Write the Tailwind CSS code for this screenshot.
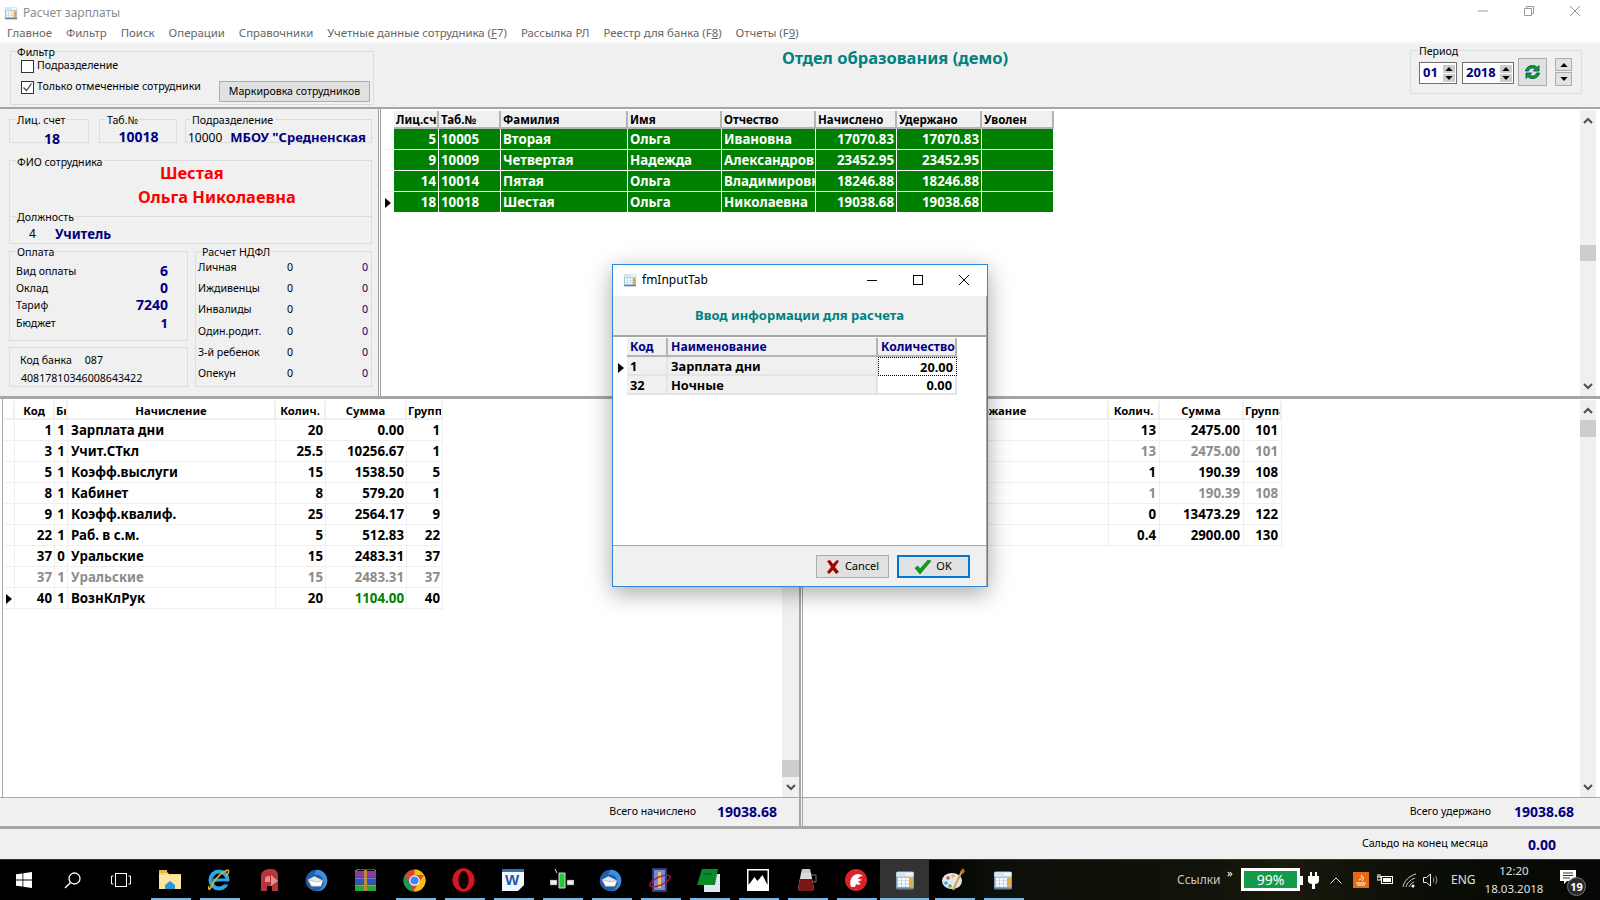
<!DOCTYPE html>
<html lang="ru">
<head>
<meta charset="utf-8">
<title>Расчет зарплаты</title>
<script src="https://cdn.jsdelivr.net/npm/@tailwindcss/browser@4"></script>
</head>
<body class="m-0 bg-white">
<svg class="hidden" aria-hidden="true">
  <symbol id="calc" viewBox="0 0 32 32">
    <rect x="2" y="2" width="28" height="28" rx="3" fill="#a9c3d8"/>
    <rect x="2" y="2" width="28" height="8" rx="2" fill="#d5e4ef"/>
    <rect x="17" y="4" width="11" height="4" fill="#f4f8fb"/>
    <g fill="#ffffff"><rect x="5" y="12" width="5" height="4"/><rect x="11" y="12" width="5" height="4"/><rect x="17" y="12" width="5" height="4"/><rect x="5" y="17" width="5" height="4"/><rect x="11" y="17" width="5" height="4"/><rect x="17" y="17" width="5" height="4"/><rect x="5" y="22" width="5" height="4"/><rect x="11" y="22" width="5" height="4"/><rect x="17" y="22" width="5" height="4"/></g>
    <rect x="23" y="12" width="5" height="14" fill="#f0a92e"/>
    <rect x="2" y="27" width="28" height="3" rx="1" fill="#5f84a3"/>
  </symbol>
  <symbol id="tbird" viewBox="0 0 32 32">
    <circle cx="16" cy="16" r="15" fill="#1f5fa8"/>
    <path d="M16 1a15 15 0 0 1 15 15c0 8-6 15-14 15 8-3 10-10 8-16C23 9 19 7 13 8 14 5 15 3 16 1z" fill="#3f8ed8"/>
    <path d="M4 15l9-5 12 6-3 8H9z" fill="#e8e8e8"/>
    <path d="M4 15l12 3 9-2-3 8H9z" fill="#ffffff" stroke="#8a8a8a" stroke-width=".7"/>
  </symbol>
  <symbol id="tri" viewBox="0 0 6 10"><path d="M0 0l6 5-6 5z" fill="#000"/></symbol>
  <symbol id="up" viewBox="0 0 9 5"><path d="M4.5 0L9 5H0z" fill="#000"/></symbol>
  <symbol id="down" viewBox="0 0 9 5"><path d="M0 0h9L4.5 5z" fill="#000"/></symbol>
  <symbol id="chevu" viewBox="0 0 10 7"><path d="M1 6l4-4 4 4" fill="none" stroke="#505050" stroke-width="2"/></symbol>
  <symbol id="chevd" viewBox="0 0 10 7"><path d="M1 1l4 4 4-4" fill="none" stroke="#505050" stroke-width="2"/></symbol>
</svg>

<div class="relative w-[1600px] h-[900px] overflow-hidden flex flex-col bg-white text-black font-['Noto_Sans',sans-serif]">

  <!-- title bar -->
  <div class="h-[22px] flex items-center shrink-0 pt-[3px]">
    <svg class="ml-[4px] w-[14px] h-[14px]"><use href="#calc"/></svg>
    <span class="ml-[5px] text-[12px] leading-none text-[#8c8c8c]">Расчет зарплаты</span>
    <div class="ml-auto flex items-center h-full -mt-[3px]">
      <svg class="w-[46px] h-[12px]" viewBox="0 0 46 12"><path d="M18 6h10" stroke="#999" stroke-width="1"/></svg>
      <svg class="w-[46px] h-[12px]" viewBox="0 0 46 12"><path d="M18.5 3.5h7v7h-7zM20.5 3.5v-2h7v7h-2" fill="none" stroke="#999"/></svg>
      <svg class="w-[46px] h-[12px] mr-[2px]" viewBox="0 0 46 12"><path d="M18 1l10 10M28 1L18 11" stroke="#999"/></svg>
    </div>
  </div>

  <!-- menu -->
  <div class="h-[19px] flex items-center pl-[7px] pt-[2px] gap-[14px] text-[11.4px] leading-none text-[#666] shrink-0 whitespace-nowrap">
    <span>Главное</span><span>Фильтр</span><span>Поиск</span><span>Операции</span><span>Справочники</span>
    <span>Учетные данные сотрудника (<u>F</u>7)</span><span>Рассылка РЛ</span><span>Реестр для банка (F<u>8</u>)</span><span>Отчеты (F<u>9</u>)</span>
  </div>
  <div class="h-[3px] bg-[#f7f7f7] shrink-0"></div>

  <!-- toolbar -->
  <div class="h-[65px] shrink-0 bg-[#f0f0f0] border-b-2 border-[#a6a6a6] flex text-[10.6px]">
    <div class="relative ml-[10px] mt-[7px] w-[364px] h-[54px] border border-[#dcdcdc] flex">
      <span class="absolute top-[-7px] left-[6px] bg-[#f0f0f0] leading-[14px]">Фильтр</span>
      <div class="pl-[10px] pt-[8px] flex flex-col gap-[9px] w-[208px] whitespace-nowrap">
        <label class="flex items-center gap-[3px] h-[12px]"><span class="w-[13px] h-[13px] border border-[#333] bg-white"></span>Подразделение</label>
        <label class="flex items-center gap-[3px] h-[12px]"><span class="w-[13px] h-[13px] border border-[#333] bg-white flex items-center justify-center"><svg class="w-[11px] h-[11px]" viewBox="0 0 11 11"><path d="M1.5 5.5l3 3 5-7" fill="none" stroke="#444" stroke-width="1.2"/></svg></span>Только отмеченные сотрудники</label>
      </div>
      <div class="w-[151px] h-[21px] mt-[29px] border border-[#adadad] bg-[#e1e1e1] flex items-center justify-center whitespace-nowrap">Маркировка сотрудников</div>
    </div>
    <div class="flex-1 text-center pt-[2px] pl-[6px]">
      <span class="text-[16.5px] leading-[24px] font-bold text-[#008080] whitespace-nowrap">Отдел образования (демо)</span>
    </div>
    <div class="relative mt-[6px] mr-[18px] w-[172px] h-[44px] border border-[#dcdcdc] flex items-start pl-[8px] pt-[5px]">
      <span class="absolute top-[-7px] left-[7px] bg-[#f0f0f0] px-px leading-[14px]">Период</span>
      <div class="w-[38px] h-[22px] mt-[6px] border border-[#707070] bg-white flex items-center justify-between pl-[3px] pr-[1px]">
        <span class="text-[13px] font-bold text-[#000080]">01</span>
        <span class="flex flex-col gap-px"><span class="w-[12px] h-[8px] bg-[#cdcdcd] flex items-center justify-center"><svg class="w-[8px] h-[4px]"><use href="#up"/></svg></span><span class="w-[12px] h-[8px] bg-[#cdcdcd] flex items-center justify-center"><svg class="w-[8px] h-[4px]"><use href="#down"/></svg></span></span>
      </div>
      <div class="ml-[5px] w-[52px] h-[22px] mt-[6px] border border-[#707070] bg-white flex items-center justify-between pl-[3px] pr-[1px]">
        <span class="text-[13px] font-bold text-[#000080]">2018</span>
        <span class="flex flex-col gap-px"><span class="w-[12px] h-[8px] bg-[#cdcdcd] flex items-center justify-center"><svg class="w-[8px] h-[4px]"><use href="#up"/></svg></span><span class="w-[12px] h-[8px] bg-[#cdcdcd] flex items-center justify-center"><svg class="w-[8px] h-[4px]"><use href="#down"/></svg></span></span>
      </div>
      <div class="ml-[4px] mt-[2px] w-[29px] h-[28px] border border-[#adadad] bg-[#e1e1e1] flex items-center justify-center">
        <svg class="w-[19px] h-[18px]" viewBox="0 0 19 18">
          <path d="M2.5 8C3 4.5 6 2.5 9.5 2.5c2 0 3.5.7 4.7 1.9L16 2.5V8h-5.6l1.9-1.9C11.500 5.300 10.500 5 9.500 5 7.500 5 6 6.200 5.500 8z" fill="#00b000" stroke="#003a80" stroke-width=".8"/>
          <path d="M16.500 10c-.5 3.500-3.500 5.500-7 5.500-2 0-3.500-.7-4.700-1.900L3 15.500V10h5.600l-1.900 1.900c.8.800 1.800 1.100 2.800 1.100 2 0 3.500-1.200 4-3z" fill="#00b000" stroke="#003a80" stroke-width=".8"/>
        </svg>
      </div>
      <div class="ml-[8px] mt-[2px] flex flex-col gap-px">
        <span class="w-[17px] h-[13px] border border-[#adadad] bg-[#e1e1e1] flex items-center justify-center"><svg class="w-[8px] h-[4px]"><use href="#up"/></svg></span>
        <span class="w-[17px] h-[14px] border border-[#adadad] bg-[#e1e1e1] flex items-center justify-center"><svg class="w-[8px] h-[4px]"><use href="#down"/></svg></span>
      </div>
    </div>
  </div>

  <!-- middle -->
  <div class="h-[287px] shrink-0 flex">
    <div class="w-[379px] shrink-0 bg-[#f0f0f0] border-r border-[#a0a0a0] pt-[10px] pl-[9px] text-[10.6px] leading-[14px]">
      <div class="flex h-[24px]">
        <div class="relative w-[80px] border border-[#dcdcdc] text-center pl-[6px]">
          <span class="absolute top-[-7px] left-[6px] bg-[#f0f0f0] px-px">Лиц. счет</span>
          <div class="pt-[12px] text-[14px] font-bold text-[#000080]">18</div>
        </div>
        <div class="relative ml-[10px] w-[78px] border border-[#dcdcdc] text-center pl-px">
          <span class="absolute top-[-7px] left-[6px] bg-[#f0f0f0] px-px">Таб.№</span>
          <div class="pt-[10px] text-[14px] font-bold text-[#000080]">10018</div>
        </div>
        <div class="relative ml-[8px] w-[187px] border border-[#dcdcdc] flex items-baseline whitespace-nowrap pl-[2px] pt-[10px]">
          <span class="absolute top-[-7px] left-[4px] bg-[#f0f0f0] px-[2px]">Подразделение</span>
          <span class="text-[12px]">10000</span><span class="ml-[8px] text-[13px] font-bold text-[#000080]">МБОУ "Средненская</span>
        </div>
      </div>
      <div class="relative mt-[17px] w-[363px] h-[56px] border border-b-0 border-[#dcdcdc] text-[16.4px] leading-[24px] font-bold text-[#ff0000]">
        <span class="absolute top-[-6px] left-[6px] bg-[#f0f0f0] px-px text-[10.6px] leading-[14px] font-normal text-black">ФИО сотрудника</span>
        <div class="pl-[150px]">Шестая</div>
        <div class="pl-[128px]">Ольга Николаевна</div>
      </div>
      <div class="relative w-[363px] h-[28px] border border-[#dcdcdc] flex items-center pt-[7px]">
        <span class="absolute top-[-7px] left-[6px] bg-[#f0f0f0] px-px">Должность</span>
        <span class="ml-[19px] text-[12px]">4</span><span class="ml-[19px] text-[13.3px] font-bold text-[#000080]">Учитель</span>
      </div>
      <div class="flex mt-[7px]">
        <div class="w-[179px]">
          <div class="relative h-[90px] border border-[#dcdcdc] pt-[10px] pl-[6px] pr-[19px]">
            <span class="absolute top-[-7px] left-[6px] bg-[#f0f0f0] px-px">Оплата</span>
            <div class="flex justify-between items-center h-[17px]"><span>Вид оплаты</span><span class="text-[14px] font-bold text-[#000080]">6</span></div>
            <div class="flex justify-between items-center h-[17px]"><span>Оклад</span><span class="text-[14px] font-bold text-[#000080]">0</span></div>
            <div class="flex justify-between items-center h-[18px]"><span>Тариф</span><span class="text-[14px] font-bold text-[#000080]">7240</span></div>
            <div class="flex justify-between items-center h-[17px]"><span>Бюджет</span><span class="text-[13px] font-bold text-[#000080]">1</span></div>
          </div>
          <div class="mt-[6px] h-[40px] border border-[#dcdcdc] pl-[10px] pt-[3px]">
            <div class="h-[18px] flex items-center"><span>Код банка</span><span class="ml-[13px]">087</span></div>
            <div class="h-[18px] flex items-center pl-[1px]">40817810346008643422</div>
          </div>
        </div>
        <div class="relative ml-[7px] w-[177px] h-[136px] border border-[#dcdcdc] pt-[4px] pl-[2px] pr-[3px]">
          <span class="absolute top-[-7px] left-[5px] bg-[#f0f0f0] px-px">Расчет НДФЛ</span>
          <div class="grid grid-cols-[86px_12px_1fr] auto-rows-[21.3px] items-center">
            <span>Личная</span><span class="text-center">0</span><span class="text-right text-[#000060]">0</span>
            <span>Иждивенцы</span><span class="text-center">0</span><span class="text-right text-[#000060]">0</span>
            <span>Инвалиды</span><span class="text-center">0</span><span class="text-right text-[#000060]">0</span>
            <span>Один.родит.</span><span class="text-center">0</span><span class="text-right text-[#000060]">0</span>
            <span>3-й ребенок</span><span class="text-center">0</span><span class="text-right text-[#000060]">0</span>
            <span>Опекун</span><span class="text-center">0</span><span class="text-right text-[#000060]">0</span>
          </div>
        </div>
      </div>
    </div>

    <div class="flex-1 ml-[1px] border-l border-[#a0a0a0] flex pt-[2px]">
      <div class="flex-1 pl-[1px]">
        <table class="table-fixed border-separate border-spacing-0 w-[672px] text-[13.3px] font-bold leading-none whitespace-nowrap [&_td]:h-[21px] [&_td]:pt-[2px] [&_td]:overflow-hidden [&_td]:border-r [&_td]:border-b [&_td]:border-white [&_td]:px-[2px] [&_th]:h-[18px] [&_th]:overflow-hidden [&_th]:px-[2px] [&_th]:pt-[2px] [&_th]:text-left [&_th]:text-[11.5px] [&_th]:font-bold [&_th]:bg-[#f0f0f0] [&_th]:border-r-2 [&_th]:border-b-2 [&_th]:border-[#b4b4b4]">
          <colgroup><col class="w-[12px]"><col class="w-[45px]"><col class="w-[62px]"><col class="w-[127px]"><col class="w-[94px]"><col class="w-[94px]"><col class="w-[81px]"><col class="w-[85px]"><col class="w-[72px]"></colgroup>
          <thead><tr><th class="!bg-white !border-0"></th><th class="!pr-0">Лиц.сч.</th><th>Таб.№</th><th>Фамилия</th><th>Имя</th><th>Отчество</th><th>Начислено</th><th>Удержано</th><th>Уволен</th></tr></thead>
          <tbody class="text-white">
            <tr><td class="!border-b-[#f0f0f0]"></td><td class="bg-[#008000] text-right">5</td><td class="bg-[#008000]">10005</td><td class="bg-[#008000]">Вторая</td><td class="bg-[#008000]">Ольга</td><td class="bg-[#008000]">Ивановна</td><td class="bg-[#008000] text-right">17070.83</td><td class="bg-[#008000] text-right">17070.83</td><td class="bg-[#008000]"></td></tr>
            <tr><td class="!border-b-[#f0f0f0]"></td><td class="bg-[#008000] text-right">9</td><td class="bg-[#008000]">10009</td><td class="bg-[#008000]">Четвертая</td><td class="bg-[#008000]">Надежда</td><td class="bg-[#008000]">Александров</td><td class="bg-[#008000] text-right">23452.95</td><td class="bg-[#008000] text-right">23452.95</td><td class="bg-[#008000]"></td></tr>
            <tr><td class="!border-b-[#f0f0f0]"></td><td class="bg-[#008000] text-right">14</td><td class="bg-[#008000]">10014</td><td class="bg-[#008000]">Пятая</td><td class="bg-[#008000]">Ольга</td><td class="bg-[#008000]">Владимировна</td><td class="bg-[#008000] text-right">18246.88</td><td class="bg-[#008000] text-right">18246.88</td><td class="bg-[#008000]"></td></tr>
            <tr><td><svg class="w-[6px] h-[10px] ml-[1px]"><use href="#tri"/></svg></td><td class="bg-[#008000] text-right">18</td><td class="bg-[#008000]">10018</td><td class="bg-[#008000]">Шестая</td><td class="bg-[#008000]">Ольга</td><td class="bg-[#008000]">Николаевна</td><td class="bg-[#008000] text-right">19038.68</td><td class="bg-[#008000] text-right">19038.68</td><td class="bg-[#008000]"></td></tr>
          </tbody>
        </table>
      </div>
      <div class="w-[16px] mr-[4px] -mt-[1px] bg-[#f0f0f0] flex flex-col shrink-0">
        <div class="h-[20px] flex items-center justify-center"><svg class="w-[10px] h-[7px]"><use href="#chevu"/></svg></div>
        <div class="mt-[115px] h-[16px] bg-[#cdcdcd]"></div>
        <div class="flex-1"></div>
        <div class="h-[20px] flex items-center justify-center"><svg class="w-[10px] h-[7px]"><use href="#chevd"/></svg></div>
      </div>
    </div>
  </div>

  <div class="h-[3px] shrink-0 bg-[#a6a6a6]"></div>

  <!-- bottom grids -->
  <div class="h-[398px] shrink-0 flex">
    <div class="w-[801px] shrink-0 pl-[2px] flex border-r-2 border-[#a6a6a6]">
      <div class="flex-1 border-l border-[#a6a6a6] pl-px pt-[2px]">
        <table class="table-fixed border-separate border-spacing-0 w-[436px] text-[13.3px] font-bold leading-none whitespace-nowrap [&_td]:h-[21px] [&_td]:pt-[2px] [&_td]:overflow-hidden [&_td]:border-r [&_td]:border-b [&_td]:border-[#efefef] [&_td]:pl-[3px] [&_td]:pr-[2px] [&_th]:h-[19px] [&_th]:overflow-hidden [&_th]:px-[1px] [&_th]:pt-[2px] [&_th]:text-[11.3px] [&_th]:font-bold [&_th]:border-r-2 [&_th]:border-b-2 [&_th]:border-[#efefef] [&_td:nth-child(n+2)]:text-right [&_td:nth-child(3)]:!text-center [&_td:nth-child(3)]:!px-0 [&_td:nth-child(4)]:!text-left">
          <colgroup><col class="w-[11px]"><col class="w-[40px]"><col class="w-[13px]"><col class="w-[208px]"><col class="w-[50px]"><col class="w-[81px]"><col class="w-[36px]"></colgroup>
          <thead><tr><th></th><th>Код</th><th class="text-left">Бюджет</th><th>Начисление</th><th>Колич.</th><th>Сумма</th><th class="text-left">Группа</th></tr></thead>
          <tbody>
            <tr><td></td><td>1</td><td>1</td><td>Зарплата дни</td><td>20</td><td>0.00</td><td>1</td></tr>
            <tr><td></td><td>3</td><td>1</td><td>Учит.СТкл</td><td>25.5</td><td>10256.67</td><td>1</td></tr>
            <tr><td></td><td>5</td><td>1</td><td>Коэфф.выслуги</td><td>15</td><td>1538.50</td><td>5</td></tr>
            <tr><td></td><td>8</td><td>1</td><td>Кабинет</td><td>8</td><td>579.20</td><td>1</td></tr>
            <tr><td></td><td>9</td><td>1</td><td>Коэфф.квалиф.</td><td>25</td><td>2564.17</td><td>9</td></tr>
            <tr><td></td><td>22</td><td>1</td><td>Раб. в с.м.</td><td>5</td><td>512.83</td><td>22</td></tr>
            <tr><td></td><td>37</td><td>0</td><td>Уральские</td><td>15</td><td>2483.31</td><td>37</td></tr>
            <tr class="text-[#8c8c8c]"><td></td><td>37</td><td>1</td><td>Уральские</td><td>15</td><td>2483.31</td><td>37</td></tr>
            <tr><td class="!px-[2px]"><svg class="w-[6px] h-[10px]"><use href="#tri"/></svg></td><td>40</td><td>1</td><td>ВознКлРук</td><td>20</td><td class="text-[#008000]">1104.00</td><td>40</td></tr>
          </tbody>
        </table>
      </div>
      <div class="w-[17px] bg-[#f0f0f0] flex flex-col shrink-0">
        <div class="h-[15px] flex items-center justify-center"><svg class="w-[10px] h-[7px]"><use href="#chevu"/></svg></div>
        <div class="mt-[346px] h-[17px] bg-[#cdcdcd]"></div>
        <div class="flex-1"></div>
        <div class="h-[20px] flex items-center justify-center"><svg class="w-[10px] h-[7px]"><use href="#chevd"/></svg></div>
      </div>
    </div>
    <div class="flex-1 ml-px border-l border-[#a6a6a6] flex pl-px pt-[2px]">
      <div class="flex-1">
        <table class="table-fixed border-separate border-spacing-0 w-[478px] text-[13.3px] font-bold leading-none whitespace-nowrap [&_td]:h-[21px] [&_td]:pt-[2px] [&_td]:overflow-hidden [&_td]:border-r [&_td]:border-b [&_td]:border-[#efefef] [&_td]:px-[3px] [&_td]:text-right [&_th]:h-[19px] [&_th]:overflow-hidden [&_th]:px-[1px] [&_th]:pt-[2px] [&_th]:text-[11.3px] [&_th]:font-bold [&_th]:border-r-2 [&_th]:border-b-2 [&_th]:border-[#efefef]">
          <colgroup><col class="w-[77px]"><col class="w-[228px]"><col class="w-[51px]"><col class="w-[84px]"><col class="w-[38px]"></colgroup>
          <thead><tr><th></th><th>Удержание</th><th>Колич.</th><th>Сумма</th><th class="text-left">Группа</th></tr></thead>
          <tbody>
            <tr><td></td><td></td><td>13</td><td>2475.00</td><td>101</td></tr>
            <tr class="text-[#8c8c8c]"><td></td><td></td><td>13</td><td>2475.00</td><td>101</td></tr>
            <tr><td></td><td></td><td>1</td><td>190.39</td><td>108</td></tr>
            <tr class="text-[#8c8c8c]"><td></td><td></td><td>1</td><td>190.39</td><td>108</td></tr>
            <tr><td></td><td></td><td>0</td><td>13473.29</td><td>122</td></tr>
            <tr><td></td><td></td><td>0.4</td><td>2900.00</td><td>130</td></tr>
          </tbody>
        </table>
      </div>
      <div class="w-[16px] mr-[4px] -mt-[1px] bg-[#f0f0f0] flex flex-col shrink-0">
        <div class="h-[20px] flex items-center justify-center"><svg class="w-[10px] h-[7px]"><use href="#chevu"/></svg></div>
        <div class="h-[17px] bg-[#cdcdcd]"></div>
        <div class="flex-1"></div>
        <div class="h-[20px] flex items-center justify-center"><svg class="w-[10px] h-[7px]"><use href="#chevd"/></svg></div>
      </div>
    </div>
  </div>

  <!-- footers -->
  <div class="h-[29px] shrink-0 flex bg-[#f0f0f0] border-t border-[#a6a6a6] text-[10.6px]">
    <div class="w-[801px] shrink-0 border-r-2 border-[#a6a6a6] flex items-center justify-end pr-[22px]">
      <span>Всего начислено</span><span class="ml-[21px] text-[14px] -mt-[1px] font-bold text-[#000080]">19038.68</span>
    </div>
    <div class="flex-1 ml-px border-l border-[#a6a6a6] flex items-center justify-end pr-[26px]">
      <span>Всего удержано</span><span class="ml-[23px] text-[14px] -mt-[1px] font-bold text-[#000080]">19038.68</span>
    </div>
  </div>
  <div class="h-[3px] shrink-0 bg-[#a6a6a6]"></div>
  <div class="h-[30px] shrink-0 bg-[#f0f0f0] flex items-center justify-end pr-[44px] text-[10.6px]">
    <span>Сальдо на конец месяца</span><span class="ml-[40px] text-[14px] font-bold text-[#000080]">0.00</span>
  </div>

  <!-- taskbar -->
  <div class="h-[41px] shrink-0 flex items-center text-[#d8d8d8] bg-[linear-gradient(90deg,#000_58%,#0c1008_62%,#12130a_76%,#1a1a0c_80%,#0a0d06_90%,#060805_100%)] border-t border-[#333]">
    <div class="w-[48px] h-full flex items-center justify-center"><svg class="w-[16px] h-[16px]" viewBox="0 0 16 16"><path d="M0 2.300l6.500-.9v6.200H0zM7.300 1.300L16 0v7.600H7.300zM0 8.400h6.500v6.200L0 13.700zM7.300 8.400H16V16l-8.700-1.200z" fill="#fff"/></svg></div>
    <div class="w-[48px] h-full flex items-center justify-center"><svg class="w-[17px] h-[17px]" viewBox="0 0 17 17"><circle cx="10.500" cy="6.500" r="5.500" fill="none" stroke="#fff" stroke-width="1.300"/><path d="M6.500 10.500L1 16" stroke="#fff" stroke-width="1.500"/></svg></div>
    <div class="w-[49px] h-full flex items-center justify-center"><svg class="w-[20px] h-[14px]" viewBox="0 0 20 14"><rect x="4.500" y=".5" width="11" height="13" fill="none" stroke="#fff"/><path d="M2.500 3H.5v8h2M17.500 3h2v8h-2" fill="none" stroke="#fff"/></svg></div>

    <div class="relative w-[49px] h-full flex items-center justify-center"><svg class="w-[22px] h-[20px]" viewBox="0 0 22 20"><path d="M0 2h8l2 2h12v15H0z" fill="#f5d77f"/><rect y="0" width="8" height="3" fill="#e0b84a"/><rect y="5" width="22" height="14" fill="#fbe7a1"/><path d="M6 15l5-4 5 4v4H6z" fill="#2a9ad6"/></svg><span class="absolute bottom-0 left-[6px] w-[40px] h-[2px] bg-[#76b9ed]"></span></div>
    <div class="relative w-[49px] h-full flex items-center justify-center"><svg class="w-[24px] h-[24px]" viewBox="0 0 24 24"><circle cx="12" cy="12" r="8.500" fill="none" stroke="#29a8e8" stroke-width="4"/><path d="M6 12h13" stroke="#29a8e8" stroke-width="3"/><rect x="15" y="13.500" width="8" height="3" fill="#000"/><path d="M3 21C7 12 14 4 21 2c2 2-1 5-2 6M3 21c-1 1-2 0-1-3" fill="none" stroke="#e6b422" stroke-width="1.500"/></svg><span class="absolute bottom-0 left-[6px] w-[40px] h-[2px] bg-[#76b9ed]"></span></div>
    <div class="w-[49px] h-full flex items-center justify-center"><svg class="w-[24px] h-[24px]" viewBox="0 0 24 24"><path d="M5 23V8c0-4 4-7 8-7h3c4 0 6 3 6 7v15h-6v-5h-5v5z" fill="#b7343a"/><path d="M9 14h5V8h-1c-2 0-4 1-4 3zM15 7l7 6-7 5z" fill="#e9a0a0" opacity=".85"/></svg></div>
    <div class="w-[49px] h-full flex items-center justify-center"><svg class="w-[23px] h-[23px]"><use href="#tbird"/></svg></div>
    <div class="w-[49px] h-full flex items-center justify-center"><svg class="w-[23px] h-[23px]" viewBox="0 0 23 23"><rect x="1" y="2" width="21" height="6" fill="#8e3aa6"/><rect x="1" y="9" width="21" height="6" fill="#2a55c8"/><rect x="1" y="16" width="21" height="6" fill="#27a83a"/><path d="M1 2l4-2h15l2 2M1 9h21M1 16h21" stroke="#ccc" stroke-width=".8" fill="none"/><rect x="10" y="1" width="3" height="21" fill="#b98a3a"/></svg></div>
    <div class="relative w-[49px] h-full flex items-center justify-center"><svg class="w-[23px] h-[23px]" viewBox="0 0 24 24"><circle cx="12" cy="12" r="11.500" fill="#db4437"/><path d="M12 .5a11.500 11.500 0 0 1 10 5.800H12z" fill="#f4c20d"/><path d="M22 6.300A11.500 11.500 0 0 1 11 23.500l5.500-9.500z" fill="#f4c20d"/><path d="M11 23.500A11.500 11.500 0 0 1 2 6.500l5.500 9.300z" fill="#0f9d58"/><circle cx="12" cy="12" r="5.500" fill="#fff"/><circle cx="12" cy="12" r="4.300" fill="#4285f4"/></svg><span class="absolute bottom-0 left-[6px] w-[40px] h-[2px] bg-[#76b9ed]"></span></div>
    <div class="relative w-[49px] h-full flex items-center justify-center"><svg class="w-[23px] h-[24px]" viewBox="0 0 23 24"><ellipse cx="11.500" cy="12" rx="11" ry="11.800" fill="#d5151f"/><ellipse cx="11.500" cy="12" rx="5" ry="9" fill="#000"/></svg><span class="absolute bottom-0 left-[6px] w-[40px] h-[2px] bg-[#76b9ed]"></span></div>
    <div class="relative w-[49px] h-full flex items-center justify-center"><svg class="w-[22px] h-[22px]" viewBox="0 0 22 22"><path d="M0 0h22v16l-6 6H0z" fill="#f4f7fb"/><rect x="0" y="0" width="22" height="3" fill="#2b6fc2"/><text x="10" y="16" font-size="15" font-weight="700" fill="#2458a8" text-anchor="middle" font-family="Liberation Sans">W</text></svg><span class="absolute bottom-0 left-[6px] w-[40px] h-[2px] bg-[#76b9ed]"></span></div>
    <div class="relative w-[49px] h-full flex items-center justify-center"><svg class="w-[24px] h-[22px]" viewBox="0 0 24 22"><path d="M5 0l2 4M9 4h6v15H9z" fill="#28c83c" stroke="#ddd"/><rect x="0" y="11" width="7" height="5" fill="#eee" stroke="#666" stroke-width=".5"/><rect x="17" y="11" width="7" height="5" fill="#eee" stroke="#666" stroke-width=".5"/></svg><span class="absolute bottom-0 left-[6px] w-[40px] h-[2px] bg-[#76b9ed]"></span></div>
    <div class="relative w-[49px] h-full flex items-center justify-center"><svg class="w-[23px] h-[23px]"><use href="#tbird"/></svg><span class="absolute bottom-0 left-[6px] w-[40px] h-[2px] bg-[#76b9ed]"></span></div>
    <div class="relative w-[49px] h-full flex items-center justify-center"><svg class="w-[24px] h-[24px]" viewBox="0 0 24 24"><rect x="4" y="0" width="15" height="24" fill="#3a3a6a"/><rect x="6" y="2" width="11" height="20" fill="#6c8fd8"/><rect x="10" y="4" width="3" height="16" fill="#e8c070"/><ellipse cx="12" cy="13" rx="11" ry="4" fill="none" stroke="#c01038" stroke-width="1.300" transform="rotate(-25 12 13)"/></svg><span class="absolute bottom-0 left-[6px] w-[40px] h-[2px] bg-[#76b9ed]"></span></div>
    <div class="relative w-[49px] h-full flex items-center justify-center"><svg class="w-[23px] h-[23px]" viewBox="0 0 23 23"><path d="M7 5h16v18H7z" fill="#dfe6f5"/><path d="M5 0h16l-3 16H0z" fill="#0c8a2a"/><path d="M7 4h8l-.5 2H6.500z" fill="#063"/></svg><span class="absolute bottom-0 left-[6px] w-[40px] h-[2px] bg-[#76b9ed]"></span></div>
    <div class="relative w-[49px] h-full flex items-center justify-center"><svg class="w-[22px] h-[22px]" viewBox="0 0 22 22"><rect width="22" height="22" fill="#fff"/><rect x="1.500" y="1.500" width="19" height="14" fill="#000"/><path d="M1.500 16l6-8 3 4 5-6 5 10v1H1.500z" fill="#fff"/></svg><span class="absolute bottom-0 left-[6px] w-[40px] h-[2px] bg-[#76b9ed]"></span></div>
    <div class="relative w-[49px] h-full flex items-center justify-center"><svg class="w-[21px] h-[22px]" viewBox="0 0 21 22"><path d="M6 0h8l1 4H5z" fill="#ccc"/><path d="M5 4h10l3 16-2 2H4l-2-2z" fill="#dcdcdc"/><path d="M4 10h12l2 10-2 2H4l-2-2z" fill="#7a1518"/><path d="M15 6h5v7h-3" fill="none" stroke="#777"/></svg><span class="absolute bottom-0 left-[6px] w-[40px] h-[2px] bg-[#76b9ed]"></span></div>
    <div class="relative w-[49px] h-full flex items-center justify-center"><svg class="w-[22px] h-[22px]" viewBox="0 0 22 22"><circle cx="11" cy="11" r="11" fill="#d8232a"/><path d="M6 18c-2-6 0-12 7-13 2 0 4 1 5 2-3 0-4 1-5 3 2 0 3 0 4 1-2 1-3 1-4 2 1 1 2 1 3 2-2 1-4 1-5 0l-1 3z" fill="#fff"/></svg><span class="absolute bottom-0 left-[6px] w-[40px] h-[2px] bg-[#76b9ed]"></span></div>
    <div class="relative w-[49px] h-full flex items-center justify-center bg-[#333]"><svg class="w-[20px] h-[21px]"><use href="#calc"/></svg><span class="absolute bottom-0 left-0 w-full h-[2px] bg-[#76b9ed]"></span></div>
    <div class="relative w-[49px] h-full flex items-center justify-center"><svg class="w-[24px] h-[24px]" viewBox="0 0 24 24"><ellipse cx="10" cy="13" rx="10" ry="8" fill="#dfe8ee"/><circle cx="6" cy="10" r="1.800" fill="#e05040"/><circle cx="11" cy="8" r="1.800" fill="#f0c030"/><circle cx="4" cy="15" r="1.800" fill="#3aa0e0"/><circle cx="8" cy="18" r="1.800" fill="#50b050"/><path d="M11 22L20 3" stroke="#d8a050" stroke-width="2"/><path d="M18 4l3-4 2 3-2 3z" fill="#c86a20"/></svg><span class="absolute bottom-0 left-[6px] w-[40px] h-[2px] bg-[#76b9ed]"></span></div>
    <div class="relative w-[49px] h-full flex items-center justify-center"><svg class="w-[20px] h-[21px]"><use href="#calc"/></svg><span class="absolute bottom-0 left-[6px] w-[40px] h-[2px] bg-[#76b9ed]"></span></div>

    <div class="ml-auto w-[423px] h-full flex items-center">
      <span class="w-[50px] text-[12px] leading-none text-[#c8c8c8]">Ссылки</span>
      <span class="w-[14px] -mt-[15px] text-[11px] leading-none text-white">»</span>
      <span class="w-[59px] h-[23px] -mt-[1px] border-[3px] border-white bg-[#149a4a] text-white text-[14px] leading-[17px] text-center">99%</span>
      <span class="w-[3px] h-[9px] bg-white"></span>
      <span class="w-[20px] flex justify-center"><svg class="w-[11px] h-[17px]" viewBox="0 0 11 17"><path d="M2 0h2v4h3V0h2v4h2v5c0 2-2 3-4 3v5H4v-5c-2 0-4-1-4-3V4h2z" fill="#fff"/></svg></span>
      <span class="w-[26px] flex justify-center"><svg class="w-[12px] h-[7px]" viewBox="0 0 12 7"><path d="M.5 6.500L6 1l5.500 5.500" fill="none" stroke="#e8e8e8"/></svg></span>
      <span class="ml-[4px] w-[16px] h-[16px] bg-[#e86a10] flex items-center justify-center"><svg class="w-[12px] h-[12px]" viewBox="0 0 12 12"><path d="M1 9h10M2 11h8M4 6c3-1 4-3 2-5 3 2 3 4 1 6" stroke="#fff" fill="none"/></svg></span>
      <span class="ml-[8px] w-[16px] flex"><svg class="w-[16px] h-[12px]" viewBox="0 0 16 12"><rect x="4.500" y="2.500" width="11" height="7" fill="none" stroke="#fff"/><rect x="6" y="4" width="8" height="4" fill="#fff"/><path d="M0 3h4v3H0zM1 0v3M3 0v3" stroke="#fff" fill="none"/></svg></span>
      <span class="ml-[9px] w-[16px] flex"><svg class="w-[16px] h-[15px]" viewBox="0 0 16 15"><path d="M1 14C2 8 7 3 14 1M4 14c1-4 4-7 9-9M7 14c1-2 2-4 5-5" fill="none" stroke="#d0d0d0"/><circle cx="11" cy="13" r="1.500" fill="#fff"/></svg></span>
      <span class="ml-[5px] w-[16px] flex"><svg class="w-[16px] h-[14px]" viewBox="0 0 16 14"><path d="M.5 4.500h3L7.500 1v12l-4-3.500h-3z" fill="none" stroke="#e8e8e8"/><path d="M10 4.500c1 1.500 1 3.500 0 5M12.500 3c1.700 2.500 1.700 5.500 0 8" fill="none" stroke="#999"/></svg></span>
      <span class="ml-[12px] w-[24px] text-[12px] leading-none text-[#e0e0e0]">ENG</span>
      <span class="w-[78px] flex flex-col items-center text-[11.5px] leading-[18px] text-[#e0e0e0]"><span>12:20</span><span>18.03.2018</span></span>
      <span class="relative w-[47px] h-full flex items-center justify-center pr-[18px]">
        <svg class="w-[16px] h-[15px] -mt-[6px]" viewBox="0 0 16 15"><path d="M0 0h16v11H7l-3 3v-3H0z" fill="#fff"/><path d="M3 3h10M3 5.500h10M3 8h7" stroke="#333"/></svg>
        <span class="absolute right-[14px] bottom-[4px] w-[19px] h-[19px] rounded-full bg-[#2a2a2a] border border-[#777] text-white text-[11px] leading-[17px] font-bold text-center">19</span>
      </span>
    </div>
  </div>

  <!-- dialog -->
  <div class="absolute left-[612px] top-[264px] w-[376px] h-[323px] bg-white border border-[#2b88d8] shadow-[0_6px_22px_rgba(0,0,0,0.35)] flex flex-col">
    <div class="h-[31px] flex items-center shrink-0 pb-[2px]">
      <svg class="ml-[10px] w-[14px] h-[14px]"><use href="#calc"/></svg>
      <span class="ml-[5px] text-[12px] leading-none">fmInputTab</span>
      <div class="ml-auto flex items-center">
        <svg class="w-[46px] h-[12px]" viewBox="0 0 46 12"><path d="M18 6.500h10" stroke="#000"/></svg>
        <svg class="w-[46px] h-[12px]" viewBox="0 0 46 12"><rect x="18.500" y="1.500" width="9" height="9" fill="none" stroke="#000"/></svg>
        <svg class="w-[46px] h-[12px]" viewBox="0 0 46 12"><path d="M18 1l10 10M28 1L18 11" stroke="#000"/></svg>
      </div>
    </div>
    <div class="h-[41px] shrink-0 bg-[#f0f0f0] border-b-2 border-[#a6a6a6] border-r border-r-[#a6a6a6] flex items-center justify-center text-[13px] font-bold text-[#008080]">Ввод информации для расчета</div>
    <div class="flex-1 pl-[1px] pt-[1px] border-r border-[#a6a6a6] border-b border-b-[#a6a6a6]">
      <table class="table-fixed border-separate border-spacing-0 w-[343px] text-[12.8px] font-bold leading-none whitespace-nowrap [&_td]:h-[19px] [&_td]:pt-[2px] [&_td]:overflow-hidden [&_td]:border-r-2 [&_td]:border-b-2 [&_td]:border-[#e4e4e4] [&_td]:px-[3px] [&_th]:h-[19px] [&_th]:pt-[2px] [&_th]:overflow-hidden [&_th]:px-[3px] [&_th]:text-left [&_th]:text-[12.2px] [&_th]:font-bold [&_th]:text-[#000080] [&_th]:bg-[#f0f0f0] [&_th]:border-r-2 [&_th]:border-b-2 [&_th]:border-[#b4b4b4]">
        <colgroup><col class="w-[13px]"><col class="w-[41px]"><col class="w-[210px]"><col class="w-[79px]"></colgroup>
        <thead><tr><th class="!bg-white !border-0"></th><th>Код</th><th>Наименование</th><th>Количество</th></tr></thead>
        <tbody>
          <tr><td class="!border-0 !px-[2px]"><svg class="w-[6px] h-[10px] ml-[2px]"><use href="#tri"/></svg></td><td class="bg-[#f0f0f0]">1</td><td class="bg-[#f0f0f0]">Зарплата дни</td><td class="text-right !border !border-dotted !border-black">20.00</td></tr>
          <tr><td class="!border-0"></td><td class="bg-[#f0f0f0]">32</td><td class="bg-[#f0f0f0]">Ночные</td><td class="text-right">0.00</td></tr>
        </tbody>
      </table>
    </div>
    <div class="h-[40px] shrink-0 bg-[#f0f0f0] border-r border-[#a6a6a6] flex items-start justify-end pt-[9px] pr-[16px] gap-[8px] text-[11px]">
      <div class="w-[73px] h-[23px] border border-[#adadad] bg-[#e1e1e1] flex items-center justify-center gap-[5px]">
        <svg class="w-[14px] h-[14px]" viewBox="0 0 14 14"><path d="M1 1l3-1 3 4 4-4 2 1-4 6 4 5-3 2-3-4-4 4-2-2 4-5z" fill="#a80000"/></svg>Cancel
      </div>
      <div class="w-[73px] h-[23px] border-2 border-[#0078d7] bg-[#e1e1e1] flex items-center justify-center gap-[5px]">
        <svg class="w-[16px] h-[14px]" viewBox="0 0 16 14"><path d="M0 8l3-2 2 3 8-9 3 1-11 13z" fill="#0aa50a" stroke="#063" stroke-width=".6"/></svg>OK
      </div>
    </div>
  </div>
</div>
</body>
</html>
